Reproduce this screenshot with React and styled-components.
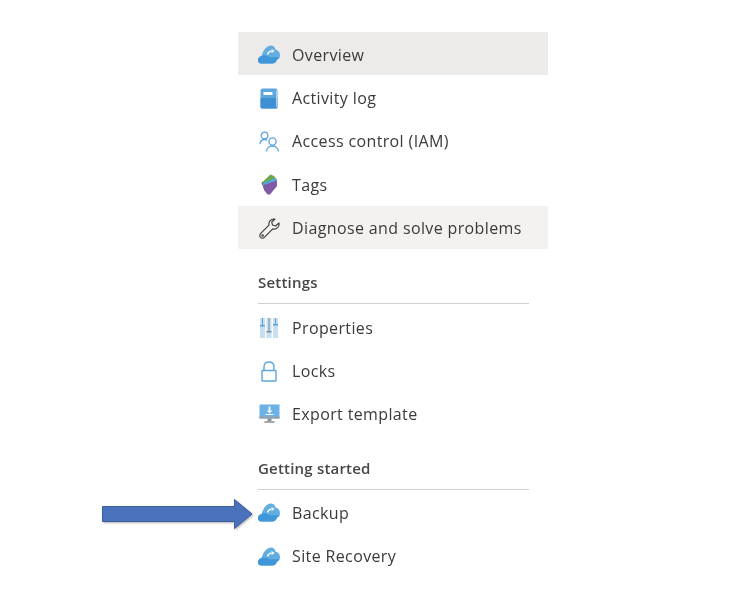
import React from 'react';
import styled, { createGlobalStyle } from 'styled-components';

const Global = createGlobalStyle`
  html, body { margin: 0; background: #fff; }
  body { font-family: "Open Sans", "Noto Sans", sans-serif; }
`;

const Page = styled.div`
  position: relative;
  width: 744px;
  height: 604px;
  padding: 32px 0 0 238px;
  box-sizing: border-box;
  overflow: hidden;
  filter: blur(0.35px);
`;

const Menu = styled.nav`
  width: 310px;
  display: flex;
  flex-direction: column;
`;

const Row = styled.div`
  height: 43.4px;
  box-sizing: border-box;
  padding: 2px 0 0 20px;
  display: flex;
  align-items: center;
  gap: 12px;
  background: ${p => p.$bg || 'transparent'};
`;

const IconBox = styled.span`
  width: 22px;
  height: 21px;
  flex: none;
  display: flex;
  align-items: center;
  justify-content: center;
`;

const Label = styled.span`
  font-size: 16px;
  letter-spacing: 0.37px;
  color: #3b3a39;
  white-space: nowrap;
`;

const Section = styled.div`
  margin: ${p => p.$top}px 19px ${p => p.$bottom}px 20px;
  height: 32px;
  border-bottom: 1px solid #d2d0ce;
  font-size: 15px;
  font-weight: 600;
  letter-spacing: 0.2px;
  color: #484644;
  line-height: 22px;
`;

const Arrow = styled.svg`
  position: absolute;
  left: 100px;
  top: 496px;
  filter: drop-shadow(1px 1px 1px rgba(80, 80, 80, 0.45));
`;

const Cloud = () => (
  <svg width="22" height="19" viewBox="0 0 22 19">
    <path d="M3 18.500C1 18.500 0 17 0 15c0-2 1.500-3.500 3.500-4C5 6 8 1 12.500.5c3 0 4.500 1.500 5 4C20 5 22 7 22 10c0 2.500-1.500 4-3 4.500-1 2.500-2 4-5 4z" fill="#62aee3" />
    <path d="M0 15c0-2 1.500-3.500 3.500-4 3.500-1 6.500-.5 8.500 1.500 3-.5 7 0 9.500-.5-.5 1.500-1.500 2.200-2.500 2.500-1 2.500-2 4-5 4H3C1 18.500 0 17 0 15z" fill="#3f96d9" />
    <path d="M9.500 9.500c.5-2 1.800-3.200 4-3.400" stroke="#fff" strokeWidth="1.300" fill="none" />
    <path d="M13.500 3.900l3.200 2.100-3 2.100z" fill="#fff" />
  </svg>
);

const Book = () => (
  <svg width="18" height="21" viewBox="0 0 18 21">
    <rect x="0.500" y="0.500" width="17" height="20" rx="2" fill="#5ea6de" />
    <rect x="0.500" y="10" width="17" height="10.500" rx="1.500" fill="#3f8fd4" />
    <rect x="3.500" y="4" width="9" height="3" fill="#fff" />
    <rect x="16" y="2" width="1.500" height="17" fill="#a9d2ef" />
  </svg>
);

const People = () => (
  <svg width="21" height="21" viewBox="0 0 21 21" fill="none" stroke="#5ba3dc" strokeWidth="1.300">
    <circle cx="5.500" cy="4.500" r="3.300" />
    <path d="M1 13c.3-2.800 2-4.500 4.500-4.500 1 0 1.800.3 2.500.8" />
    <circle cx="13.500" cy="10.500" r="3.600" />
    <path d="M7.500 20.500c.2-3 2.500-5.500 6-5.500s5.800 2.500 6 5.500" />
  </svg>
);

const Tag = () => (
  <svg width="17" height="21" viewBox="0 0 17 21">
    <path d="M.5 9L2 7.500l1.500 9z" fill="#5e5a68" />
    <path d="M1.500 8L9.500.5l3.500 1.500 3 4L2 10z" fill="#6aa84f" />
    <path d="M2 9L15 4l1 3L2.500 12z" fill="#55a6dd" />
    <path d="M2.500 11L16 6.500V12L9 20.500H6.500L3 16z" fill="#7f5ba6" />
  </svg>
);

const Wrench = () => (
  <svg width="21" height="21" viewBox="0 0 21 21" fill="none" stroke="#3b3a39" strokeWidth="1.100" strokeLinejoin="round">
    <path d="M15 1a5 5 0 0 0-5 6.200L1.500 15.700a2.600 2.600 0 0 0 3.800 3.700l8.500-8.500A5 5 0 0 0 20 5l-3.500 3-3-1-.8-3 3.300-3z" />
    <circle cx="3.600" cy="17.500" r="0.700" />
  </svg>
);

const Sliders = () => (
  <svg width="18" height="20" viewBox="0 0 18 20">
    <rect x="0" y="0" width="5" height="20" fill="#c7e0f2" />
    <rect x="6.500" y="0" width="5" height="20" fill="#c7e0f2" />
    <rect x="13" y="0" width="5" height="20" fill="#c7e0f2" />
    <rect x="2" y="0" width="1" height="8" fill="#5ba3dc" />
    <rect x="8.500" y="0" width="1" height="14" fill="#7a8a96" />
    <rect x="15" y="0" width="1" height="7" fill="#5ba3dc" />
    <rect x="0" y="7" width="5" height="1.500" fill="#5ba3dc" />
    <rect x="6.500" y="13" width="5" height="1.500" fill="#7a8a96" />
    <rect x="13" y="6" width="5" height="1.500" fill="#5ba3dc" />
  </svg>
);

const Lock = () => (
  <svg width="16" height="21" viewBox="0 0 16 21" fill="none" stroke="#5ba8de" strokeWidth="1.400">
    <rect x="1" y="9.500" width="14" height="10.500" rx="0.500" />
    <path d="M3 9.500V6c0-3 2-5 5-5s5 2 5 5v3.500" />
  </svg>
);

const Monitor = () => (
  <svg width="21" height="20" viewBox="0 0 21 20">
    <rect x="0.500" y="0.500" width="20" height="14" fill="#6cb2e4" />
    <rect x="0.500" y="12.500" width="20" height="2" fill="#9a9fa3" />
    <rect x="8.500" y="14.500" width="4" height="3" fill="#8b9095" />
    <rect x="5.500" y="17" width="10" height="2" fill="#a5a8ab" />
    <path d="M9.700 2.500h1.600v4h2l-2.800 3-2.800-3h2z" fill="#fff" />
    <rect x="6.500" y="10" width="8" height="1" fill="#fff" />
  </svg>
);

const items = {
  top: [
    { label: 'Overview', icon: <Cloud />, bg: '#edebe9' },
    { label: 'Activity log', icon: <Book /> },
    { label: 'Access control (IAM)', icon: <People /> },
    { label: 'Tags', icon: <Tag /> },
    { label: 'Diagnose and solve problems', icon: <Wrench />, bg: '#f3f2f1' },
  ],
  settings: [
    { label: 'Properties', icon: <Sliders /> },
    { label: 'Locks', icon: <Lock /> },
    { label: 'Export template', icon: <Monitor /> },
  ],
  started: [
    { label: 'Backup', icon: <Cloud /> },
    { label: 'Site Recovery', icon: <Cloud /> },
  ],
};

const renderRows = list =>
  list.map(item => (
    <Row key={item.label} $bg={item.bg}>
      <IconBox>{item.icon}</IconBox>
      <Label>{item.label}</Label>
    </Row>
  ));

export default function App() {
  return (
    <Page>
      <Global />
      <Menu>
        {renderRows(items.top)}
        <Section $top={22} $bottom={1}>Settings</Section>
        {renderRows(items.settings)}
        <Section $top={22} $bottom={0}>Getting started</Section>
        {renderRows(items.started)}
      </Menu>
      <Arrow width="156" height="36" viewBox="0 0 156 36">
        <path d="M2.500 10.500H134.500V3.500L152 18 134.500 32.500V25.500H2.500z" fill="#4a71bb" stroke="#3d5f9e" strokeWidth="1" />
      </Arrow>
    </Page>
  );
}
